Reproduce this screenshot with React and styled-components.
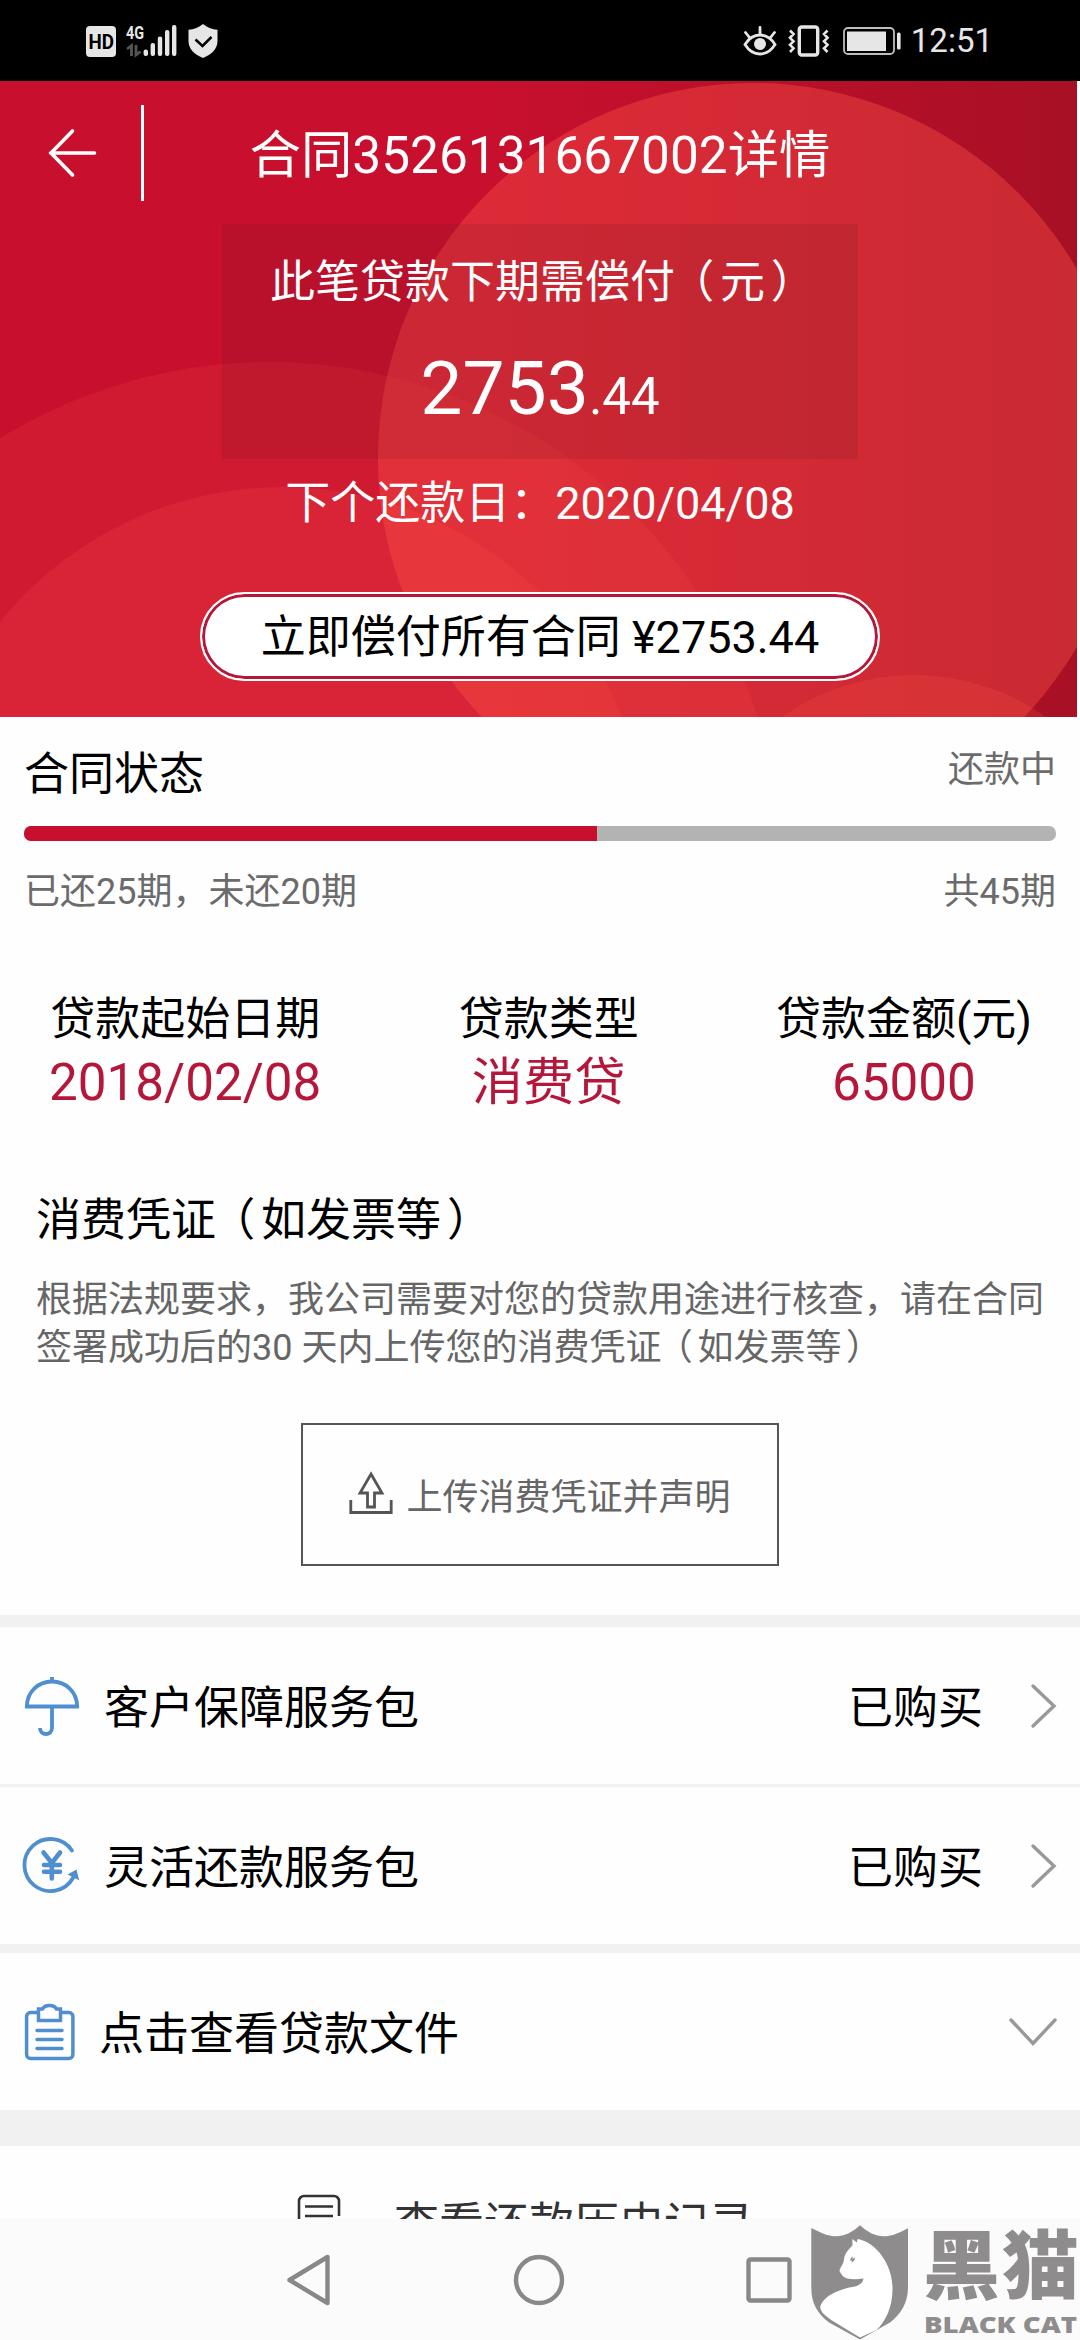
import styled, { createGlobalStyle } from 'styled-components';

const services = [
  { icon: 'umbrella', text: '客户保障服务包', status: '已购买' },
  { icon: 'refund', text: '灵活还款服务包', status: '已购买' },
];

const facts = [
  { label: '贷款起始日期', value: '2018/02/08' },
  { label: '贷款类型', value: '消费贷' },
  { label: '贷款金额(元)', value: '65000' },
];

const paid = 25;
const total = 45;

const SystemIcons = () => (
  <svg width='132' height='34' viewBox='0 0 132 34' fill='#e6e6e6'>
    <rect x='0' y='2' width='30' height='31' rx='4' />
    <text
      x='2.5'
      y='24.5'
      fontSize='19.5'
      fontWeight='700'
      fill='#000'
      textLength='25.5'
      lengthAdjust='spacingAndGlyphs'>
      HD
    </text>
    <text
      x='40'
      y='14.8'
      fontSize='19'
      fontWeight='700'
      textLength='18'
      lengthAdjust='spacingAndGlyphs'>
      4G
    </text>
    <g fill='none' stroke='#555' strokeWidth='2.8'>
      <path d='M41 25l4.500-3.500V32' />
      <path d='M50 21v10l4.500-3.500' />
    </g>
    <rect x='57.6' y='25.5' width='4.4' height='6.5' rx='2' />
    <rect x='64.6' y='19' width='4.4' height='13' rx='2' />
    <rect x='71.8' y='12.5' width='4.4' height='19.5' rx='2' />
    <rect x='79' y='6' width='4.4' height='26' rx='2' />
    <rect x='86' y='1' width='4.4' height='31' rx='2' />
    <path d='M117 0c4 3.500 9 5.200 14.500 5.800v11.200c0 8-6 13.500-14.500 17-8.500-3.500-14.500-9-14.500-17V5.800C108 5.200 113 3.500 117 0z' />
    <path
      d='M109.500 15.500l7 6.500 9-9'
      fill='none'
      stroke='#000'
      strokeWidth='2.500'
    />
  </svg>
);

const EyeIcon = () => (
  <svg width='34' height='32' viewBox='0 0 34 32' fill='none' stroke='#e6e6e6'>
    <path
      d='M2 19.500C6 13 11 10 17 10s11 3 15 9.500C28 26 23 29 17 29S6 26 2 19.500z'
      strokeWidth='2.800'
    />
    <circle cx='17' cy='19' r='6' fill='#e6e6e6' stroke='none' />
    <path
      d='M17 2.500V9M2.500 7.500l4 5M31.500 7.500l-4 5'
      strokeWidth='2.800'
      strokeLinecap='round'
    />
  </svg>
);

const VibrateIcon = () => (
  <svg width='42' height='32' viewBox='0 0 42 32' fill='none' stroke='#e6e6e6'>
    <rect x='11.300' y='2' width='18.400' height='28' rx='2.500' strokeWidth='3.400' />
    <path
      d='M2 5.500l3.500 3.500-3.500 3.800 3.500 3.500-3.500 3.500 3.500 3.500L2 27M39.500 5.500L36 9l3.500 3.800-3.500 3.500 3.500 3.500-3.500 3.500 3.500 3.700'
      strokeWidth='2.600'
    />
  </svg>
);

const BatteryIcon = () => (
  <svg width='58' height='28' viewBox='0 0 58 28'>
    <rect x='1' y='1' width='50' height='26' rx='4' fill='none' stroke='#bdbdbd' strokeWidth='1.800' />
    <rect x='4' y='4.500' width='39' height='19.500' fill='#e6e6e6' />
    <rect x='54' y='5.500' width='3.600' height='17' rx='1.500' fill='#e6e6e6' />
  </svg>
);

const BackIcon = () => (
  <svg width='48' height='48' viewBox='0 0 48 48' fill='none' stroke='#fff' strokeWidth='3.600'>
    <path d='M46.500 24H2.500M24.500 2L3 24l21.500 22' strokeLinecap='round' strokeLinejoin='round' />
  </svg>
);

// overlapping translucent discs behind the summary
const Discs = () => (
  <Backdrop viewBox='0 0 1077 636' preserveAspectRatio='none'>
    <defs>
      <linearGradient id='base' x1='0' x2='1' y1='0' y2='0'>
        <stop offset='0.45' stopColor='#c8102e' />
        <stop offset='1' stopColor='#a81025' />
      </linearGradient>
    </defs>
    <rect width='1077' height='636' fill='url(#base)' />
    <g fill='#ff5548'>
      <circle cx='753' cy='377' r='375' opacity='0.39' />
      <circle cx='269' cy='795' r='514' opacity='0.15' />
      <circle cx='283' cy='771' r='365' opacity='0.18' />
      <circle cx='914' cy='822' r='228' opacity='0.2' />
    </g>
  </Backdrop>
);

const UploadIcon = () => (
  <svg width='44' height='44' viewBox='0 0 44 44' fill='none' stroke='#555' strokeWidth='2.800'>
    <path d='M22 3L33 22h-7.500v14h-7V22H11z' />
    <path d='M1.800 29v12.500h40.400V29' />
  </svg>
);

const UmbrellaIcon = () => (
  <svg width='56' height='60' viewBox='0 0 56 60' fill='none' stroke='#4f8fd0' strokeWidth='3.800'>
    <path d='M2.800 30.500C3 16 14 5.500 28 5.500s25 10.500 25.200 25z' />
    <path d='M28 1v4M28 31v21c0 8-12 8-12 0' />
  </svg>
);

const RefundIcon = () => (
  <svg width='56' height='58' viewBox='0 0 56 58' fill='none' stroke='#4f8fd0' strokeWidth='3.800'>
    <path d='M48 13.500A26 26 0 1 0 49 41' strokeLinecap='round' />
    <path d='M52.500 32.500l2.700 10.800L43.500 37.500z' fill='#4f8fd0' stroke='none' />
    <path
      d='M19.500 15.500l8.300 10.500 8.300-10.500M27.800 26v15.500M20 28h16M20 34.800h16'
      strokeWidth='4.600'
      strokeLinecap='round'
    />
  </svg>
);

const ClipboardIcon = () => (
  <svg width='51' height='58' viewBox='0 0 51 58' fill='none' stroke='#4f8fd0' strokeWidth='3.500'>
    <path d='M14 9.500H6.500A4 4 0 0 0 2.600 13.500v38a4 4 0 0 0 4 4h38.300a4 4 0 0 0 4-4v-38a4 4 0 0 0-4-4H37' />
    <path d='M14.500 6h4C20 3 22.500 2.500 25.500 2.500S31 3 32.500 6h4v11.500h-22z' />
    <path d='M13 27.500h25M13 36.500h25M13 45.500h25' strokeLinecap='round' />
  </svg>
);

const ChevronIcon = ({ down }) =>
  down ? (
    <svg width='48' height='28' viewBox='0 0 48 28' fill='none' stroke='#999' strokeWidth='3.400'>
      <path d='M2 2l22 23.500L46 2' strokeLinecap='round' />
    </svg>
  ) : (
    <svg width='28' height='44' viewBox='0 0 28 44' fill='none' stroke='#999' strokeWidth='3.400'>
      <path d='M4 2l21 20L4 42' strokeLinecap='round' />
    </svg>
  );

const ReceiptIcon = () => (
  <svg width='44' height='44' viewBox='0 0 44 44' fill='none' stroke='#333' strokeWidth='2.600'>
    <path d='M42 22V7a5 5 0 0 0-5-5H7a5 5 0 0 0-5 5v37' />
    <path d='M8 12.500h28M8 22h28' />
  </svg>
);

const icons = { umbrella: <UmbrellaIcon />, refund: <RefundIcon /> };

const BlackCat = () => (
  <Watermark viewBox='0 0 270 117' fill='#8f8c8d'>
    <path d='M1.300 5C13 11 19 13.300 26 13.300c9 0 16-4 24-11 8 7 15 11 24 11 7 0 13-2.300 24-8V64c0 16-7 27-18 35.500L50 116.500 19 99.500C8 91 1.300 81 1.300 65z' />
    <path
      d='M42.300 16l4.500 3.500L47.500 16C66 19 82 41 82.500 64c.5 20-7 34-16 43L50 114.500 22 97.500C14 92 10 88 10.300 83.500 14 72 30 66 45 63.500c5-1.500 8-4 8.500-8-6 1-12 1-16.500 0-2-1-5-2-7.500-7.500.5-4 4.500-7 4.500-12 1-6 5-10 8.500-13.500z'
      fill='#fff'
    />
    <path d='M40 37.500c.5-2.500 1.500-3.500 3-4l-.8 2.500 2.800-1.500c0 2.500-1.500 4.500-3.500 5l.5-2z' />
    <text
      transform='translate(113 70) scale(1 .97)'
      fontFamily='"Noto Sans CJK SC", sans-serif'
      fontWeight='900'
      fontSize='77'
      textLength='156'>
      黑猫
    </text>
    <text
      x='114'
      y='109.500'
      fontFamily='"Open Sans", sans-serif'
      fontWeight='800'
      fontSize='23.500'
      textLength='153'
      lengthAdjust='spacingAndGlyphs'>
      BLACK CAT
    </text>
  </Watermark>
);

const App = () => {
  return (
    <Screen>
      <GlobalStyle />
      <StatusBar>
        <SystemIcons />
        <div className='right'>
          <EyeIcon />
          <VibrateIcon />
          <BatteryIcon />
          <span>12:51</span>
        </div>
      </StatusBar>

      <Header>
        <Discs />
        <TitleBar>
          <div className='back'>
            <BackIcon />
          </div>
          <h1>合同3526131667002详情</h1>
        </TitleBar>
        <AmountBox>
          <p>
            此笔贷款下期需偿付<Paren $shift={-0.13}>（</Paren>元
            <Paren $shift={0.13}>）</Paren>
          </p>
          <Amount>
            2753<small>.44</small>
          </Amount>
        </AmountBox>
        <DueDate>下个还款日：2020/04/08</DueDate>
        <PayButton type='button'>立即偿付所有合同 ¥2753.44</PayButton>
      </Header>

      <Progress>
        <div className='line'>
          <h2>合同状态</h2>
          <span>还款中</span>
        </div>
        <Track>
          <div style={{ width: `${(paid / total) * 100}%` }} />
        </Track>
        <div className='line'>
          <span>已还25期，未还20期</span>
          <span>共45期</span>
        </div>
      </Progress>

      <Facts>
        {facts.map(({ label, value }) => (
          <div key={label}>
            <dt>{label}</dt>
            <dd>{value}</dd>
          </div>
        ))}
      </Facts>

      <Voucher>
        <h2>
          消费凭证<Paren $shift={-0.13}>（</Paren>如发票等
          <Paren $shift={0.13}>）</Paren>
        </h2>
        <p>
          根据法规要求，我公司需要对您的贷款用途进行核查，请在合同
          <br />
          签署成功后的30 天内上传您的消费凭证
          <Paren $shift={-0.13}>（</Paren>如发票等
          <Paren $shift={0.13}>）</Paren>
        </p>
        <UploadButton type='button'>
          <UploadIcon />
          <span>上传消费凭证并声明</span>
        </UploadButton>
      </Voucher>

      <Divider $size={12} />
      {services.map(({ icon, text, status }) => (
        <Row key={icon}>
          {icons[icon]}
          <span>{text}</span>
          <span className='status'>{status}</span>
          <ChevronIcon />
        </Row>
      ))}
      <Divider $size={9} />
      <Row>
        <ClipboardIcon />
        <span>点击查看贷款文件</span>
        <span className='status' />
        <ChevronIcon down />
      </Row>
      <Divider $size={36} />

      <History>
        <ReceiptIcon />
        <span>查看还款历史记录</span>
      </History>

      <NavBar>
        <svg width='46' height='54' viewBox='0 0 46 54'>
          <path d='M3.500 27L41.500 4v46z' />
        </svg>
        <svg width='52' height='52' viewBox='0 0 52 52'>
          <circle cx='26' cy='26' r='23' />
        </svg>
        <svg width='46' height='46' viewBox='0 0 46 46'>
          <rect x='2.500' y='2.500' width='41' height='41' rx='2' />
        </svg>
      </NavBar>
      <BlackCat />
    </Screen>
  );
};

const GlobalStyle = createGlobalStyle`
  * {
    box-sizing: border-box;
    margin: 0;
    padding: 0;
  }

  body {
    background: #fff;
    font-family: Roboto, 'Noto Sans CJK SC', sans-serif;
    color: #000;
  }

  button {
    font-family: inherit;
  }

  h1, h2 {
    font-weight: 400;
  }

  svg {
    display: block;
    flex-shrink: 0;
    overflow: visible;
  }
`;

const Screen = styled.main`
  position: relative;
  width: 1080px;
  height: 2340px;
  overflow: hidden;
  background: #fefefe;
`;

const StatusBar = styled.div`
  display: flex;
  align-items: center;
  justify-content: space-between;
  height: 81px;
  padding: 0 87px 0 86px;
  background: #000;
  color: #e6e6e6;

  .right {
    display: flex;
    align-items: center;
    gap: 11px;
  }

  .right svg:nth-child(3) {
    margin: 0 -1px 0 2px;
  }

  span {
    font-size: 33px;
    line-height: 40px;
  }
`;

const Header = styled.header`
  position: relative;
  display: flex;
  flex-direction: column;
  align-items: center;
  height: 636px;
  color: #fff;

  & > *:not(svg) {
    position: relative;
  }
`;

const Backdrop = styled.svg`
  position: absolute;
  top: 0;
  left: 0;
  width: 1077px;
  height: 636px;
  overflow: hidden;
`;

// full-width parentheses sit closer to the middle of their cell
const Paren = styled.span`
  margin-left: ${({ $shift }) => $shift}em;
  margin-right: ${({ $shift }) => -$shift}em;
`;

const TitleBar = styled.div`
  display: grid;
  grid-template-columns: 144px 1fr 144px;
  align-items: center;
  width: 100%;
  height: 143px;

  .back {
    display: flex;
    align-items: center;
    height: 96px;
    padding-left: 48px;
    border-right: 3px solid #fff;
  }

  h1 {
    padding-top: 6px;
    font-size: 51.4px;
    line-height: 60px;
    text-align: center;
    white-space: nowrap;
  }
`;

const AmountBox = styled.div`
  width: 636px;
  height: 235px;
  padding-top: 34px;
  background: rgba(110, 25, 30, 0.16);
  text-align: center;

  p {
    font-size: 45px;
    line-height: 50px;
  }
`;

const Amount = styled.div`
  margin-top: 35px;
  font-size: 75px;
  line-height: 90px;

  small {
    font-size: 51px;
    line-height: 1;
  }
`;

const DueDate = styled.p`
  margin-top: 20px;
  font-size: 45px;
  line-height: 50px;
`;

const PayButton = styled.button`
  width: 680px;
  height: 89px;
  margin-top: 63px;
  padding-top: 3px;
  border: 2px solid #fff;
  border-radius: 45px;
  background: #fff;
  box-shadow: inset 0 0 0 3px #b5173a;
  font-size: 45px;
  line-height: 50px;
  color: #000;
`;

const Progress = styled.section`
  padding: 33px 24px 0;

  .line {
    display: flex;
    align-items: flex-start;
    justify-content: space-between;
  }

  h2 {
    font-size: 45px;
    line-height: 50px;
  }

  span {
    font-size: 36px;
    line-height: 40px;
    color: #6b6b6b;
  }
`;

const Track = styled.div`
  height: 15px;
  margin: 26px 0 31px;
  border-radius: 7px;
  background: #b3b3b3;
  overflow: hidden;

  div {
    height: 100%;
    background: #c8102e;
  }
`;

const Facts = styled.dl`
  display: flex;
  justify-content: space-between;
  margin-top: 82px;
  padding: 0 48px 0 49px;
  text-align: center;

  dt {
    font-size: 45px;
    line-height: 52px;
  }

  dd {
    margin-top: 7px;
    font-size: 51.2px;
    line-height: 60px;
    color: #b5173a;
  }
`;

const Voucher = styled.section`
  display: flex;
  flex-direction: column;
  margin: 82px 0 49px;
  padding: 0 36px;

  h2 {
    font-size: 45px;
    line-height: 52px;
  }

  p {
    margin-top: 29px;
    font-size: 36px;
    line-height: 48px;
    color: #666;
    white-space: nowrap;
  }
`;

const UploadButton = styled.button`
  display: flex;
  align-items: center;
  align-self: center;
  justify-content: center;
  gap: 13px;
  width: 478px;
  height: 143px;
  margin-top: 51px;
  border: 2px solid #555;
  background: none;
  font-size: 36px;
  line-height: 40px;
  color: #666;

  svg {
    margin-top: -3px;
  }

  span {
    padding-top: 7px;
  }
`;

const Divider = styled.div`
  height: ${({ $size }) => $size}px;
  background: #f1f1f1;
`;

const Row = styled.div`
  display: flex;
  align-items: center;
  height: 157px;
  padding: 0 23px 0 24px;

  & + & {
    height: 160px;
    border-top: 3px solid #f1f1f1;
  }

  span {
    margin-left: 24px;
    padding-top: 7px;
    font-size: 45px;
    line-height: 50px;
  }

  .status {
    margin-left: auto;
    margin-right: 46px;
  }
`;

const History = styled.div`
  display: flex;
  height: 73px;
  padding: 48px 0 0 297px;
  overflow: hidden;
  color: #333;

  span {
    margin: 6px 0 0 53px;
    font-size: 45px;
    line-height: 50px;
  }
`;

const NavBar = styled.nav`
  position: relative;
  display: flex;
  align-items: center;
  justify-content: space-between;
  height: 121px;
  padding: 0 288px 0 286px;
  background: #fbfbfb;

  svg {
    fill: none;
    stroke: #888;
    stroke-width: 4.4px;
    stroke-linejoin: round;
  }
`;

const Watermark = styled.svg`
  position: absolute;
  right: 0;
  bottom: 0;
  width: 270px;
  height: 117px;
`;

export default App;
